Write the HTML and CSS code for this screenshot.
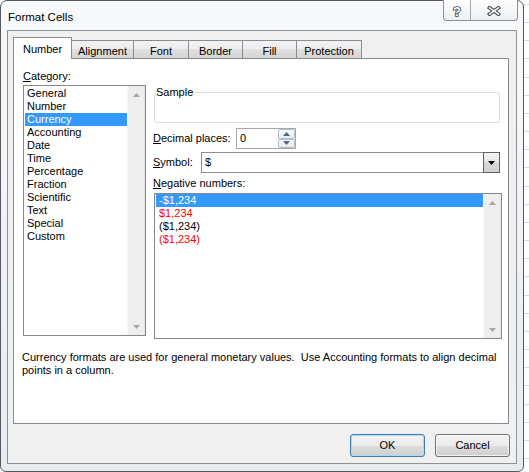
FILE: index.html
```html
<!DOCTYPE html>
<html>
<head>
<meta charset="utf-8">
<title>Format Cells</title>
<link rel="stylesheet" href="styles.css">
</head>
<body>
<div class="window">
  <div class="titlebar">
    <span class="title">Format Cells</span>
    <div class="caption">
      <span class="cb help"><svg width="12" height="14" viewBox="0 0 12 14"><text x="6" y="12" text-anchor="middle" class="qm">?</text></svg></span>
      <span class="cb close"><svg width="14" height="10" viewBox="0 0 14 10"><path class="xo" d="M2.5 1.8L11.5 8.2M11.5 1.8L2.5 8.2"/><path class="xi" d="M2.5 1.8L11.5 8.2M11.5 1.8L2.5 8.2"/></svg></span>
    </div>
  </div>
  <div class="client">
    <div class="tabs">
      <div class="tab sel t-number">Number</div>
      <div class="tab t-align">Alignment</div>
      <div class="tab t-font">Font</div>
      <div class="tab t-border">Border</div>
      <div class="tab t-fill">Fill</div>
      <div class="tab t-prot">Protection</div>
    </div>
    <div class="panel">
      <div class="cols">
        <div class="left">
          <div class="label"><u>C</u>ategory:</div>
          <div class="listbox cat">
            <div class="items">
              <div class="item">General</div>
              <div class="item">Number</div>
              <div class="item sel">Currency</div>
              <div class="item">Accounting</div>
              <div class="item">Date</div>
              <div class="item">Time</div>
              <div class="item">Percentage</div>
              <div class="item">Fraction</div>
              <div class="item">Scientific</div>
              <div class="item">Text</div>
              <div class="item">Special</div>
              <div class="item">Custom</div>
            </div>
            <div class="sb">
              <span class="arr"><svg width="7" height="4" viewBox="0 0 7 4"><polygon points="0,4 7,4 3.5,0" class="tri"/></svg></span>
              <span class="arr"><svg width="7" height="4" viewBox="0 0 7 4"><polygon points="0,0 7,0 3.5,4" class="tri"/></svg></span>
            </div>
          </div>
        </div>
        <div class="right">
          <div class="group">
            <span class="group-label">Sample</span>
            <div class="group-box"></div>
          </div>
          <div class="row dec">
            <span class="row-label dec-label"><u>D</u>ecimal places:</span>
            <div class="spin-input">
              <span class="val">0</span>
              <div class="spin">
                <span class="spin-btn"><svg width="7" height="4" viewBox="0 0 7 4"><polygon points="0,4 7,4 3.5,0" class="stri"/></svg></span>
                <span class="spin-btn"><svg width="7" height="4" viewBox="0 0 7 4"><polygon points="0,0 7,0 3.5,4" class="stri"/></svg></span>
              </div>
            </div>
          </div>
          <div class="row sym">
            <span class="row-label sym-label"><u>S</u>ymbol:</span>
            <div class="combo">
              <span class="val">$</span>
              <span class="combo-btn"><svg width="7" height="4" viewBox="0 0 7 4"><polygon points="0,0 7,0 3.5,4"/></svg></span>
            </div>
          </div>
          <div class="label neg-label"><u>N</u>egative numbers:</div>
          <div class="listbox neg">
            <div class="items">
              <div class="item sel">-$1,234</div>
              <div class="item red">$1,234</div>
              <div class="item">($1,234)</div>
              <div class="item red">($1,234)</div>
            </div>
            <div class="sb">
              <span class="arr"><svg width="7" height="4" viewBox="0 0 7 4"><polygon points="0,4 7,4 3.5,0" class="tri"/></svg></span>
              <span class="arr"><svg width="7" height="4" viewBox="0 0 7 4"><polygon points="0,0 7,0 3.5,4" class="tri"/></svg></span>
            </div>
          </div>
        </div>
      </div>
      <p class="desc">Currency formats are used for general monetary values.&nbsp; Use Accounting formats to align decimal<br>points in a column.</p>
    </div>
    <div class="btns">
      <button class="btn default">OK</button>
      <button class="btn">Cancel</button>
    </div>
  </div>
</div>
</body>
</html>
```

FILE: styles.css
```css
* { box-sizing: border-box; }

html, body {
  margin: 0;
  padding: 0;
}

body {
  width: 529px;
  height: 472px;
  overflow: hidden;
  font: 11px/13px "Liberation Sans", Arial, sans-serif;
  color: #000;
  background-color: #fff;
  background-image: repeating-linear-gradient(to bottom, #dadcdd 0, #dadcdd 1px, #fff 1px, #fff 18.16px);
  background-position: 0 4px;
}

.window {
  width: 524px;
  height: 472px;
  border: 1px solid #55585c;
  border-radius: 7px 7px 6px 6px;
  background: linear-gradient(180deg, #f8f9fb 0%, #eef1f4 60%, #e9ecef 100%);
  padding: 0 6px 7px 6px;
  display: flex;
  flex-direction: column;
}

.titlebar {
  height: 29px;
  flex: none;
  display: flex;
  justify-content: space-between;
  align-items: flex-start;
}

.title {
  font-size: 11.5px;
  line-height: 14px;
  margin: 9px 0 0 1px;
  color: #000;
}

.caption {
  display: flex;
  height: 21px;
  margin: -1px -1px 0 0;
  border: 1px solid #8c8f93;
  border-top: none;
  border-radius: 0 0 4px 4px;
  background: linear-gradient(180deg, #fdfdfe 0%, #eef0f3 100%);
}

.cb {
  display: flex;
  align-items: center;
  justify-content: center;
}

.cb.help {
  width: 27px;
  border-right: 1px solid #a3a6aa;
  padding-top: 1px;
}

.cb.close {
  width: 46px;
  padding-top: 2px;
}

.qm {
  font: bold 13px "Liberation Sans", Arial, sans-serif;
  fill: #fff;
  stroke: #3f4246;
  stroke-width: 1.6px;
  paint-order: stroke;
}

.xo {
  stroke: #44474b;
  stroke-width: 3.6;
  stroke-linecap: square;
  fill: none;
}

.xi {
  stroke: #fff;
  stroke-width: 1.5;
  stroke-linecap: square;
  fill: none;
}

.client {
  flex: 1;
  border: 1px solid #8e9196;
  background: #f0f0f0;
  display: flex;
  flex-direction: column;
}

.tabs {
  display: flex;
  align-items: flex-end;
  height: 21px;
  margin: 6px 0 0 5px;
  flex: none;
}

.tab {
  height: 18px;
  border: 1px solid #898c95;
  border-bottom: none;
  border-left: none;
  background: linear-gradient(180deg, #f4f4f4 0%, #ececec 50%, #e1e1e1 50%, #d5d5d5 100%);
  text-align: center;
  padding-top: 4px;
  white-space: nowrap;
}

.tab.sel {
  position: relative;
  z-index: 2;
  height: 22px;
  margin-bottom: -1px;
  border-left: 1px solid #898c95;
  background: #fff;
  padding-top: 5px;
}

.t-number { width: 59px; }
.t-align { width: 62px; }
.t-font { width: 55px; }
.t-border { width: 54px; }
.t-fill { width: 54px; }
.t-prot { width: 65px; }

.panel {
  flex: none;
  height: 366px;
  margin: 0 7px 0 5px;
  border: 1px solid #898c95;
  background: #fff;
  padding: 11px 0 0 8px;
}

.cols {
  display: flex;
  align-items: flex-start;
}

.left {
  margin-left: 1px;
  width: 123px;
}

.label {
  line-height: 13px;
  height: 13px;
  white-space: nowrap;
}

.listbox {
  display: flex;
  border: 1px solid #828790;
  background: #fff;
}

.cat {
  width: 123px;
  height: 251px;
  margin-top: 2px;
}

.items {
  flex: 1;
  min-width: 0;
}

.cat .items { padding: 1px 0 0 1px; }

.item {
  height: 13px;
  line-height: 13px;
  padding-left: 2px;
  white-space: nowrap;
}

.item.sel {
  background: #3399ff;
  color: #fff;
}

.item.red { color: #ff0000; }

.sb {
  width: 18px;
  flex: none;
  background: #eeeeee;
  border-left: 1px solid #f7f7f7;
  border-right: 1px solid #e6e6e6;
  display: flex;
  flex-direction: column;
  justify-content: space-between;
}

.arr {
  height: 17px;
  display: flex;
  align-items: center;
  justify-content: center;
}

.tri { fill: #a6a6a6; }

.right {
  margin-left: 7px;
  width: 349px;
  padding-top: 16px;
}

.group-label {
  display: block;
  width: fit-content;
  margin-left: 3px;
  padding-right: 2px;
  line-height: 13px;
  background: #fff;
  position: relative;
  z-index: 1;
}

.group-box {
  margin: -7px 0 0 1px;
  width: 346px;
  height: 31px;
  border: 1px solid #d5dfe5;
  border-radius: 3px;
}

.row {
  display: flex;
  align-items: center;
  height: 21px;
}

.row.dec { margin-top: 5px; }
.row.sym { margin-top: 3px; }

.row-label { white-space: nowrap; line-height: 13px; }
.dec-label { width: 83px; }
.sym-label { width: 48px; }

.spin-input {
  width: 60px;
  height: 21px;
  border: 1px solid #a4a8b0;
  background: #fff;
  display: flex;
}

.val {
  flex: 1;
  padding-left: 3px;
  line-height: 19px;
}

.spin {
  width: 17px;
  display: flex;
  flex-direction: column;
}

.spin-btn {
  flex: 1;
  display: flex;
  align-items: center;
  justify-content: center;
  border: 1px solid #b6bcc6;
  border-radius: 2px;
  background: linear-gradient(180deg, #fbfbfb 0%, #e8eaee 100%);
}

.stri { fill: #51658a; }

.combo {
  width: 299px;
  height: 21px;
  border: 1px solid #8c8e94;
  background: #fff;
  display: flex;
}

.combo-btn {
  width: 17px;
  margin: -1px -1px -1px 0;
  border: 1px solid #5f6166;
  background: linear-gradient(180deg, #f4f4f4 0%, #e6e6e6 50%, #dadada 50%, #cfcfcf 100%);
  display: flex;
  align-items: center;
  justify-content: center;
}

.neg-label { margin-top: 4px; }

.neg {
  width: 348px;
  height: 146px;
  margin: 3px 0 0 1px;
}

.neg .items { padding: 0 0 0 1px; }
.neg .item { padding-left: 3px; }

.desc {
  margin: 12px 0 0 0;
  line-height: 13px;
  white-space: nowrap;
}

.btns {
  display: flex;
  justify-content: flex-end;
  gap: 10px;
  margin: 10px 6px 0 0;
}

.btn {
  width: 75px;
  height: 23px;
  font: inherit;
  line-height: 13px;
  color: #000;
  padding: 0;
  border: 1px solid #707070;
  border-radius: 3px;
  background: linear-gradient(180deg, #f2f2f2 0%, #ebebeb 50%, #dddddd 50%, #cfcfcf 100%);
  box-shadow: inset 0 0 0 1px rgba(255,255,255,0.7);
}

.btn.default {
  border-color: #3c7fb1;
  box-shadow: inset 0 0 0 1px #a9dcf4;
}
```
